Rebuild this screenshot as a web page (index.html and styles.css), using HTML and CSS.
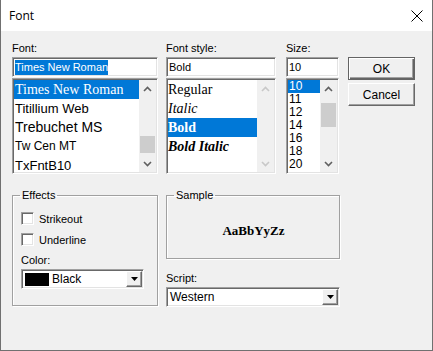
FILE: index.html
```html
<!DOCTYPE html>
<html lang="en">
<head>
  <meta charset="UTF-8" />
  <title>Font</title>
  <link rel="stylesheet" href="styles.css">
</head>
<body>
  <div class="dialog">
    <div class="titlebar">
      <span class="title">Font</span>
      <svg class="close" width="12" height="12" viewBox="0 0 12 12">
        <path d="M0.5 0.5 L11.5 11.5 M11.5 0.5 L0.5 11.5" stroke="#000" stroke-width="1" fill="none" />
      </svg>
    </div>

    <div class="content">
      <div class="top">
        <div class="col col-font">
          <div class="label">Font:</div>
          <div class="edit"><span class="sel">Times New Roman</span></div>
          <div class="list">
            <div class="rows">
              <div class="row on f-times">Times New Roman</div>
              <div class="row f-titillium">Titillium Web</div>
              <div class="row f-trebuchet">Trebuchet MS</div>
              <div class="row f-twcen">Tw Cen MT</div>
              <div class="row f-txfnt">TxFntB10</div>
            </div>
            <div class="scroll">
              <div class="arrow"><svg width="9" height="6" viewBox="0 0 9 6"><path d="M1 5 L4.5 1.5 L8 5" stroke="#606060" stroke-width="1.6" fill="none" /></svg></div>
              <div class="track"><div class="thumb thumb-font"></div></div>
              <div class="arrow"><svg width="9" height="6" viewBox="0 0 9 6"><path d="M1 1 L4.5 4.5 L8 1" stroke="#606060" stroke-width="1.6" fill="none" /></svg></div>
            </div>
          </div>
        </div>

        <div class="col col-style">
          <div class="label">Font style:</div>
          <div class="edit">Bold</div>
          <div class="list">
            <div class="rows">
              <div class="row s-row">Regular</div>
              <div class="row s-row s-italic">Italic</div>
              <div class="row s-row s-bold on">Bold</div>
              <div class="row s-row s-bold s-italic">Bold Italic</div>
            </div>
            <div class="scroll">
              <div class="arrow"><svg width="9" height="6" viewBox="0 0 9 6"><path d="M1 5 L4.5 1.5 L8 5" stroke="#c8c8c8" stroke-width="1.6" fill="none" /></svg></div>
              <div class="track"></div>
              <div class="arrow"><svg width="9" height="6" viewBox="0 0 9 6"><path d="M1 1 L4.5 4.5 L8 1" stroke="#c8c8c8" stroke-width="1.6" fill="none" /></svg></div>
            </div>
          </div>
        </div>

        <div class="col col-size">
          <div class="label">Size:</div>
          <div class="edit">10</div>
          <div class="list">
            <div class="rows">
              <div class="row z-row on">10</div>
              <div class="row z-row">11</div>
              <div class="row z-row">12</div>
              <div class="row z-row">14</div>
              <div class="row z-row">16</div>
              <div class="row z-row">18</div>
              <div class="row z-row">20</div>
            </div>
            <div class="scroll">
              <div class="arrow"><svg width="9" height="6" viewBox="0 0 9 6"><path d="M1 5 L4.5 1.5 L8 5" stroke="#606060" stroke-width="1.6" fill="none" /></svg></div>
              <div class="track"><div class="thumb thumb-size"></div></div>
              <div class="arrow"><svg width="9" height="6" viewBox="0 0 9 6"><path d="M1 1 L4.5 4.5 L8 1" stroke="#606060" stroke-width="1.6" fill="none" /></svg></div>
            </div>
          </div>
        </div>

        <div class="col col-buttons">
          <div class="btn btn-default">OK</div>
          <div class="btn">Cancel</div>
        </div>
      </div>

      <div class="bottom">
        <fieldset class="group group-effects">
          <legend>Effects</legend>
          <div class="check-row"><span class="check"></span>Strikeout</div>
          <div class="check-row"><span class="check"></span>Underline</div>
          <div class="label label-color">Color:</div>
          <div class="combo combo-color">
            <span class="swatch"></span>
            <span class="combo-text">Black</span>
            <span class="drop"><svg width="7" height="4" viewBox="0 0 7 4"><path d="M0 0 H7 L3.5 4 Z" fill="#000" /></svg></span>
          </div>
        </fieldset>

        <div class="col-right">
          <fieldset class="group group-sample">
            <legend>Sample</legend>
            <div class="sample">AaBbYyZz</div>
          </fieldset>
          <div class="label label-script">Script:</div>
          <div class="combo combo-script">
            <span class="combo-text">Western</span>
            <span class="drop"><svg width="7" height="4" viewBox="0 0 7 4"><path d="M0 0 H7 L3.5 4 Z" fill="#000" /></svg></span>
          </div>
        </div>
      </div>
    </div>
  </div>
</body>
</html>
```

FILE: styles.css
```css
body {
  margin: 0;
  background: #f0f0f0;
}
.dialog {
  width: 433px;
  height: 351px;
  box-sizing: border-box;
  border: 1px solid #707070;
  border-top: none;
  background: #f0f0f0;
  font-family: "Liberation Sans", Arial, sans-serif;
  font-size: 11px;
  color: #000;
  overflow: hidden;
}
.titlebar {
  height: 31px;
  background: #fff;
  display: flex;
  align-items: center;
  justify-content: space-between;
  padding: 0 9px 0 8px;
}
.title {
  font-family: "Open Sans", "Noto Sans", sans-serif;
  font-size: 12px;
}
.content {
  padding: 10px 0 0 11px;
}
.top {
  display: flex;
}
.col-font {
  width: 146px;
  margin-right: 8px;
}
.col-style {
  width: 110px;
  margin-right: 10px;
}
.col-size {
  width: 53px;
  margin-right: 9px;
}
.col-buttons {
  width: 67px;
  padding-top: 16px;
}
.label {
  height: 14px;
  line-height: 14px;
  margin-bottom: 2px;
}

/* sunken fields */
.edit, .list, .combo, .check {
  box-sizing: border-box;
  background: #fff;
  border: 1px solid;
  border-color: #a0a0a0 #fff #fff #a0a0a0;
  box-shadow: inset 1px 1px #696969, inset -1px -1px #e3e3e3;
  padding: 1px;
}
.edit {
  height: 20px;
  line-height: 16px;
  padding-left: 2px;
}
.sel {
  display: inline-block;
  background: #0078d7;
  color: #fff;
  line-height: 15px;
}
.list {
  height: 96px;
  margin-top: 1px;
  display: flex;
  overflow: hidden;
}
.rows {
  flex: 1;
  overflow: hidden;
}
.row {
  height: 19px;
  line-height: 19px;
  padding-left: 1px;
  white-space: nowrap;
}
.row.on {
  background: #0078d7;
  color: #fff;
}
.f-times { font-family: "Liberation Serif", serif; font-size: 14px; }
.f-titillium { font-family: "Liberation Sans", sans-serif; font-size: 13px; }
.f-trebuchet { font-family: "Liberation Sans", sans-serif; font-size: 14px; }
.f-twcen { font-family: "Liberation Sans", sans-serif; font-size: 12px; }
.f-txfnt { font-family: "Liberation Sans", sans-serif; font-size: 13px; }
.s-row {
  font-family: "Liberation Serif", serif;
  font-size: 14px;
  padding-left: 0;
}
.s-italic { font-style: italic; }
.s-bold { font-weight: bold; }
.z-row {
  height: 13px;
  line-height: 13px;
  font-size: 12px;
  padding-left: 1px;
}
.scroll {
  width: 17px;
  background: #f0f0f0;
  display: flex;
  flex-direction: column;
}
.arrow {
  height: 17px;
  display: flex;
  align-items: center;
  justify-content: center;
}
.track {
  flex: 1;
}
.thumb {
  width: 15px;
  margin: 0 auto;
  background: #cdcdcd;
}
.thumb-font {
  margin-top: 39px;
  height: 17px;
}
.thumb-size {
  margin-top: 6px;
  height: 24px;
}

/* buttons */
.btn {
  width: 67px;
  height: 23px;
  box-sizing: border-box;
  display: flex;
  align-items: center;
  justify-content: center;
  background: #f0f0f0;
  border: 1px solid;
  border-color: #fff #696969 #696969 #fff;
  box-shadow: inset -1px -1px #a0a0a0;
  font-size: 12px;
}
.btn-default {
  border: 1px solid #646464;
  box-shadow: inset 1px 1px #fff, inset -1px -1px #646464, inset -2px -2px #a0a0a0;
  margin-bottom: 3px;
}

/* bottom area */
.bottom {
  display: flex;
  margin-top: 15px;
}
.group {
  margin: 0;
  box-sizing: border-box;
  border: 1px solid #a0a0a0;
  box-shadow: 1px 1px #fff, inset 1px 1px #fff;
  padding: 0 7px 0 8px;
  min-width: 0;
}
.group legend {
  padding: 0 2px;
  margin-left: -1px;
  line-height: 12px;
  font-size: 11px;
}
.group-effects {
  width: 146px;
  height: 117px;
  margin-right: 8px;
  padding-top: 11px;
}
.check-row {
  display: flex;
  align-items: center;
  height: 13px;
  margin-bottom: 8px;
  font-size: 11px;
}
.check {
  width: 13px;
  height: 13px;
  margin-right: 5px;
}
.label-color {
  margin-top: -1px;
}
.combo {
  height: 20px;
  display: flex;
  align-items: center;
  padding: 1px;
}
.combo-color {
  width: 123px;
}
.swatch {
  width: 24px;
  height: 13px;
  margin: 0 2px 0 2px;
  background: #000;
}
.combo-text {
  flex: 1;
  font-size: 12px;
  padding-left: 1px;
}
.combo-script .combo-text {
  padding-left: 2px;
}
.drop {
  width: 16px;
  height: 16px;
  box-sizing: border-box;
  display: flex;
  align-items: center;
  justify-content: center;
  background: #f0f0f0;
  border: 1px solid;
  border-color: #fff #696969 #696969 #fff;
  box-shadow: inset -1px -1px #a0a0a0;
}
.col-right {
  width: 174px;
}
.group-sample {
  width: 174px;
  height: 70px;
  padding-top: 4px;
}
.sample {
  height: 52px;
  display: flex;
  align-items: center;
  justify-content: center;
  font-family: "Liberation Serif", serif;
  font-weight: bold;
  font-size: 13px;
}
.label-script {
  margin-top: 12px;
}
.combo-script {
  width: 174px;
}
```
